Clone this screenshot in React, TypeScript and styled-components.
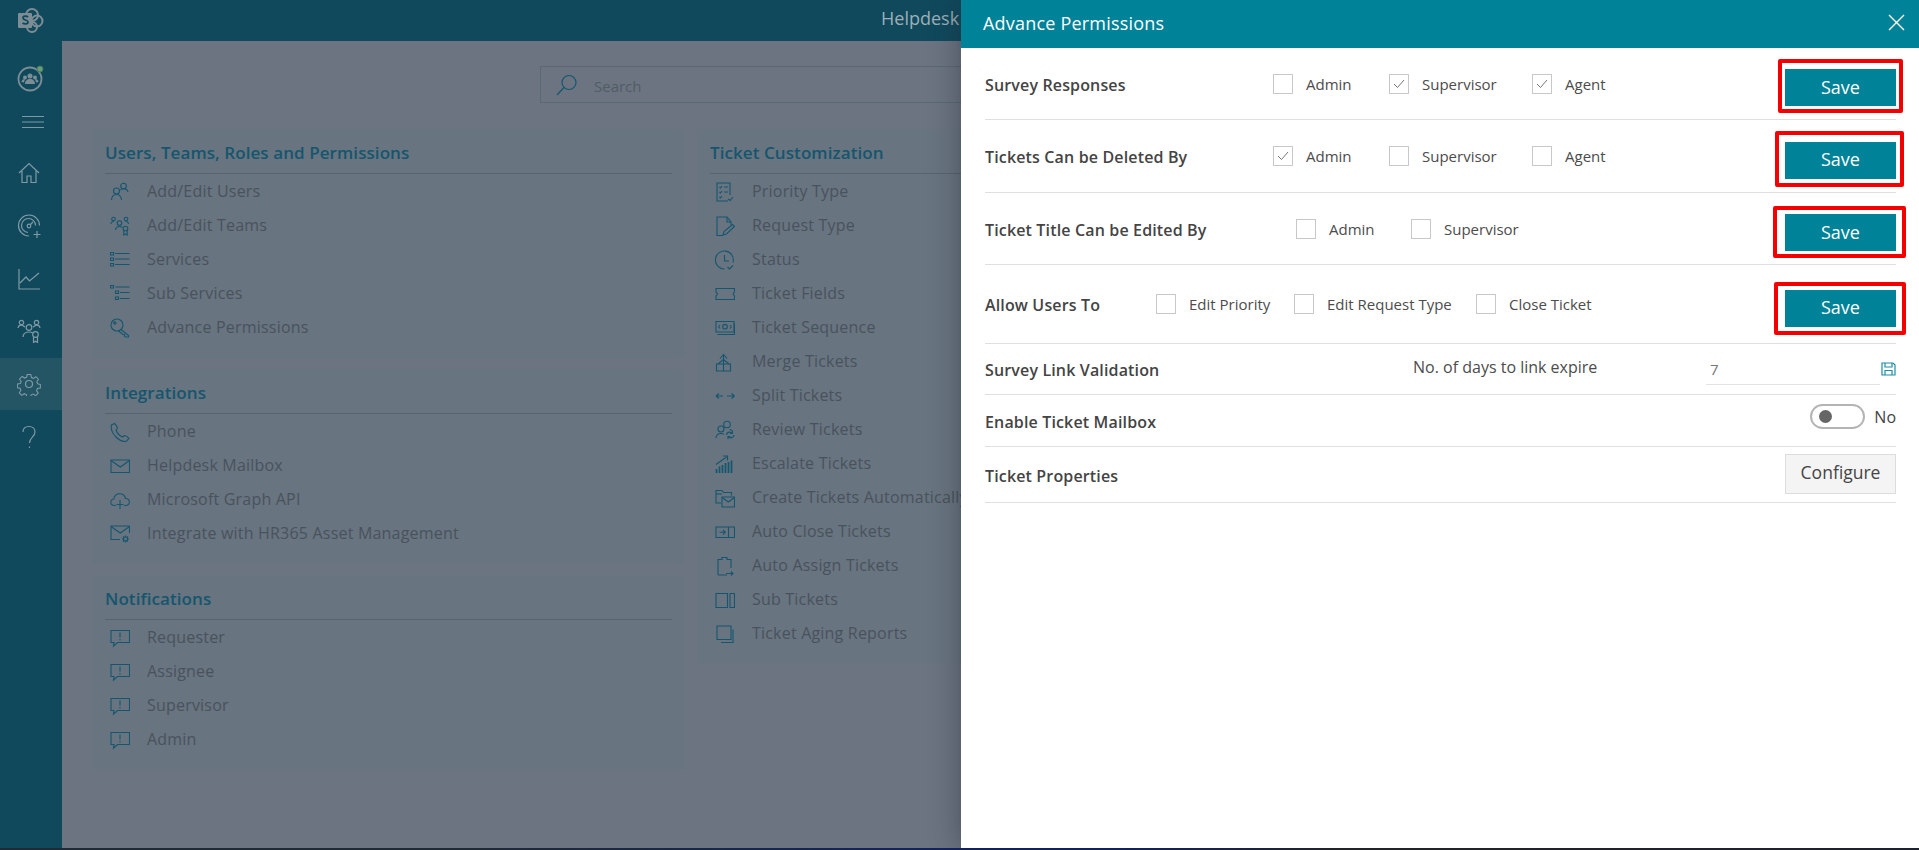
import React from "react"
import styled, { createGlobalStyle } from "styled-components"

const GlobalStyle = createGlobalStyle`
  html, body {
    margin: 0;
    padding: 0;
    overflow: hidden;
  }
  body {
    font-family: "Open Sans", "Noto Sans", sans-serif;
  }
  * {
    box-sizing: border-box;
  }
`

const Page = styled.div`
  position: relative;
  width: 1919px;
  height: 850px;
  overflow: hidden;
  background: #6b7480;
`

const Shell = styled.div`
  display: flex;
  height: 848px;
`

const Sidebar = styled.nav`
  width: 62px;
  flex: none;
  display: flex;
  flex-direction: column;
  background: #10495c;
`

const LogoSlot = styled.div<{ $h: number }>`
  height: ${({ $h }) => $h}px;
  display: flex;
  align-items: center;
  justify-content: center;
`

const NavList = styled.div`
  margin-top: 18px;
`

const NavItem = styled.div<{ $active?: boolean }>`
  height: 52.7px;
  display: flex;
  align-items: center;
  justify-content: center;
  padding-right: 4px;
  background: ${({ $active }) => ($active ? "#235565" : "transparent")};
`

const Main = styled.div`
  flex: 1;
  min-width: 0;
  display: flex;
  flex-direction: column;
`

const TopBar = styled.header`
  height: 41px;
  flex: none;
  padding-left: 819px;
  background: #10495c;
  color: #9db0b9;
  font-size: 18px;
  line-height: 36px;
`

const Content = styled.div`
  padding: 25px 0 0 30px;
`

const SearchRow = styled.div`
  height: 37px;
  width: 900px;
  margin: 0 0 26px 448px;
  display: flex;
  align-items: center;
  gap: 16px;
  padding-left: 15px;
  border: 1px solid #5a6875;
  color: #515c67;
  font-size: 15px;
`

const SearchText = styled.span`
  padding-top: 3px;
`

const Columns = styled.div`
  display: grid;
  grid-template-columns: 593px 593px;
  gap: 12px;
  align-items: start;
`

const Column = styled.div`
  display: flex;
  flex-direction: column;
  gap: 11px;
`

const Card = styled.section`
  padding: 0 13px 13px;
  background: #68747f;
`

const CardTitle = styled.h3`
  margin: 0 0 1px;
  padding: 11px 0 7px;
  font-size: 17px;
  font-weight: 600;
  line-height: 26px;
  letter-spacing: 0.08px;
  color: #15566e;
  border-bottom: 1px solid #586370;
`

const Item = styled.div`
  height: 34px;
  display: flex;
  align-items: center;
  gap: 17px;
  padding-left: 5px;
  color: #48525e;
  font-size: 16px;
  letter-spacing: 0.2px;
  white-space: nowrap;
`

const ItemLabel = styled.span`
  margin-top: -2px;
`

const ItemGlyph = styled.svg`
  width: 20px;
  height: 20px;
  flex: none;
  fill: none;
  stroke: #15566f;
  stroke-width: 1.1;
`

const NavGlyph = styled.svg`
  width: 24px;
  height: 24px;
  fill: none;
  stroke: #7f9aa5;
  stroke-width: 1.2;
`

const BottomStrip = styled.div`
  position: absolute;
  left: 0;
  right: 0;
  bottom: 0;
  height: 2px;
  z-index: 3;
  background: linear-gradient(90deg, #1e2a36 0%, #1e2a36 25%, #13235a 50%, #13235a 58%, #222428 70%, #1d2230 100%);
`

const Panel = styled.aside`
  position: absolute;
  top: 0;
  right: 0;
  bottom: 0;
  width: 958px;
  z-index: 2;
  background: #fff;
  box-shadow: 0 0 28px rgba(30, 38, 48, 0.45);
`

const PanelHeader = styled.div`
  height: 48px;
  display: flex;
  align-items: center;
  justify-content: space-between;
  padding: 0 14px 3px 22px;
  background: #008299;
  color: #fff;
  font-size: 18px;
  letter-spacing: 0.2px;
`

const PanelBody = styled.div`
  padding: 0 23px 0 24px;
`

const Row = styled.div<{ $h: number }>`
  height: ${({ $h }) => $h}px;
  display: flex;
  align-items: center;
  border-bottom: 1px solid #dfdfdf;
`

const RowLabel = styled.div<{ $w?: number }>`
  width: ${({ $w }) => ($w ? `${$w}px` : "auto")};
  flex: none;
  padding-top: 2px;
  color: #444;
  font-size: 16px;
  font-weight: 600;
  letter-spacing: 0.15px;
`

const Option = styled.label<{ $w: number }>`
  width: ${({ $w }) => $w}px;
  flex: none;
  display: flex;
  align-items: center;
  gap: 13px;
  color: #4c4c4c;
  font-size: 15px;
`

const Box = styled.span`
  width: 20px;
  height: 20px;
  flex: none;
  display: grid;
  place-items: center;
  border: 1px solid #c8c8c8;
`

const Spacer = styled.div`
  flex: 1;
`

const SaveWrap = styled.div`
  position: relative;
  flex: none;
  margin-top: 8px;
`

const SaveButton = styled.button`
  display: block;
  width: 111px;
  height: 37px;
  border: 0;
  padding: 0 0 2px;
  background: #008299;
  color: #fff;
  font-family: inherit;
  font-size: 18px;
`

const Highlight = styled.span<{ $x: number; $y: number; $r: number; $b: number }>`
  position: absolute;
  left: -${({ $x }) => $x}px;
  top: -${({ $y }) => $y}px;
  right: -${({ $r }) => $r}px;
  bottom: -${({ $b }) => $b}px;
  border: 4px solid #f40000;
  border-radius: 2px;
`

const Hint = styled.div`
  width: 293px;
  flex: none;
  margin-top: -4px;
  color: #4c4c4c;
  font-size: 16px;
`

const DaysField = styled.div`
  width: 174px;
  height: 28px;
  flex: none;
  margin-top: 3px;
  padding: 2px 0 0 4px;
  border-bottom: 1px solid #e2e2e2;
  color: #777;
  font-size: 15px;
`

const DiskIcon = styled.svg`
  width: 15px;
  height: 14px;
  flex: none;
  margin: 0 0 0 1px;
  fill: none;
  stroke: #1c8ea5;
  stroke-width: 1.2;
`

const ToggleWrap = styled.div`
  display: flex;
  align-items: center;
  gap: 9px;
  margin-top: -8px;
  color: #444;
  font-size: 16px;
`

const Track = styled.span`
  width: 55px;
  height: 25px;
  display: flex;
  align-items: center;
  padding-left: 7px;
  border: 2px solid #b4b4b4;
  border-radius: 13px;
`

const Knob = styled.span`
  width: 13px;
  height: 13px;
  border-radius: 50%;
  background: #666;
`

const ConfigureButton = styled.button`
  width: 111px;
  height: 40px;
  margin-top: -1px;
  padding: 0 0 5px;
  border: 1px solid #dcdcdc;
  background: #f4f4f4;
  color: #444;
  font-family: inherit;
  font-size: 17.5px;
`

type GlyphName =
  | "users" | "teams" | "services" | "subservices" | "key" | "phone" | "mail" | "cloud" | "mailgear" | "note"
  | "priority" | "request" | "status" | "ticket" | "money" | "merge" | "split" | "review" | "escalate"
  | "auto" | "close" | "assign" | "sub" | "aging"

const glyphs: Record<GlyphName, React.ReactNode> = {
  users: (
    <>
      <circle cx="13.5" cy="4" r="2.8" />
      <path d="M11 8.5c-.6-1 1-2 2.5-1.900 2 0 4 1 4.500 3.400" />
      <circle cx="6.5" cy="9" r="3" />
      <path d="M1.500 18c.3-3.500 2.500-5.500 5-5.500s4.500 2 5 5.500" />
    </>
  ),
  teams: (
    <>
      <circle cx="3.500" cy="3" r="1.800" />
      <circle cx="16" cy="3" r="1.800" />
      <circle cx="9.500" cy="7" r="2.300" />
      <path d="M1 8c.3-2 1.500-2.800 3-2.500M18.500 8c-.3-2-1.500-2.800-3-2.500M5.500 14c.3-2.500 2-3.500 4-3.500 1.200 0 2 .3 3 1" />
      <circle cx="15.500" cy="12.500" r="2.300" />
      <path d="M13.800 14.500V19l1.700-1 1.700 1v-4.500" />
    </>
  ),
  services: (
    <>
      <path d="M0.500 2.500h3v2.500h-3zM0.500 8h3v2.500h-3zM0.500 13.500h3V16h-3z" />
      <path d="M5 3.500h14.500M5 9h14.500M5 14.500h14.500" />
    </>
  ),
  subservices: (
    <>
      <path d="M0.500 1.500h3V4h-3zM5.500 7h3v2.500h-3zM5.500 13h3v2.500h-3z" />
      <path d="M5.500 3h14M10 8.500h9.500M10 14.500h9.500" />
    </>
  ),
  key: (
    <>
      <circle cx="7" cy="7" r="6" />
      <circle cx="4.800" cy="5" r="1.100" />
      <path d="M11 11.500l7.500 6v1.500h-3l-1-1v-1.500h-1.500l-4.500-3.500" />
    </>
  ),
  phone: <path d="M4.500 1.500L1.500 3c-1 4 1 8 4 11.500 3.500 3.500 7 5.500 10.500 5l3-3c-1-1.500-2.500-2.500-4.500-3l-2 1.500c-2.500-1-5.500-4-6.500-7L7.500 6c-.5-1.500-1.500-3.500-3-4.500z" />,
  mail: (
    <>
      <path d="M1 4h18.500v12.500H1z" />
      <path d="M1 4.500l9.300 6.500 9.200-6.500" />
    </>
  ),
  cloud: (
    <>
      <path d="M6 15.500H4.500C2 15.500.8 13.800.8 12.300c0-1.800 1.500-3.300 3-3.300C4.200 6 6.500 3.800 9.800 3.800c3 0 5 2 5.700 4.700 2.300 0 3.800 1.700 3.800 3.500s-1.500 3.500-3.800 3.500H14" />
      <path d="M10 10v9M6.500 14.500h7" />
    </>
  ),
  mailgear: (
    <>
      <path d="M19.500 9V2H1v13.500h9" />
      <path d="M1 2.500l9.300 6.500L19.500 2.500" />
      <circle cx="15.500" cy="15" r="2" />
      <path d="M15.500 11.500v1.500M15.500 17v1.500M12 15h1.500M17.500 15H19M13 12.500l1 1M17 16.500l1 1M18 12.500l-1 1M14 16.500l-1 1" />
    </>
  ),
  note: (
    <>
      <path d="M4 14.500H1V2.500h18.500v12H7.500L3.500 18l.5-3.500z" />
      <path d="M10 4.500v5M10 11v1.500" />
    </>
  ),
  priority: (
    <>
      <path d="M15 13V1H2v18h11" />
      <path d="M4.500 5l1 1 1.500-2M4.500 10l1 1 1.500-2M4.500 15l1 1 1.500-2M9 5h4M9 10h4M13 17l2 1.500 3-3.500" />
    </>
  ),
  request: (
    <>
      <path d="M8 19.500H2V1h10l4 5v3" />
      <path d="M12 1v5h4M8 19l1-3.500 8.500-7 2 2-8 7.500z" />
    </>
  ),
  status: (
    <>
      <path d="M18 12.500A9 9 0 1 0 9.500 19" />
      <path d="M9.500 5v6h4.500M12.500 17l2 2 3.500-3.500" />
    </>
  ),
  ticket: <path d="M1 4.500h18.500v3.500l-1.500 2 1.500 2v3.500H1V12l1.500-2L1 8z" />,
  money: (
    <>
      <path d="M1 3.500h18v10.500H1z" />
      <path d="M19.500 5.500v11H2.500" />
      <circle cx="10" cy="8.700" r="2.300" />
      <path d="M3.500 8.700L5 7M3.500 8.700L5 10.500M16.500 8.700L15 7M16.500 8.700L15 10.500" />
    </>
  ),
  merge: (
    <>
      <path d="M1.500 12h7v7h-7zM8.500 12h7v7h-7zM8.500 12V3" />
      <path d="M5 6.500l3.500-4 3.500 4M3 12l5.500-4.500L14 12" />
    </>
  ),
  split: <path d="M1 10h7M1 10l3-2.500M1 10l3 2.500M12 10h7.500M19.500 10l-3-2.500M19.500 10l-3 2.500" />,
  review: (
    <>
      <circle cx="12" cy="4.500" r="3.300" />
      <circle cx="6" cy="9" r="3" />
      <path d="M1 18c.3-3 2.500-4.500 5-4.500 1 0 2 .2 3 .8M14.500 9.500c1 .2 2 .6 3 1.500" />
      <path d="M11.500 15c.3-2 2-3 4-2.800l2 1.300M19 15c-.3 2-2 3-4 2.800l-2-1.300M17.500 11v2.500H15M13 19v-2.500h2.500" />
    </>
  ),
  escalate: (
    <>
      <path d="M1 10.500L11.500 3M8 2h4.500v4.500" />
      <path d="M1.500 19v-4M4.500 19v-6.500M7.500 19V11M10.500 19V9M13.500 19V8M16.500 19V6.500" strokeWidth="1.700" />
    </>
  ),
  auto: (
    <>
      <path d="M6 15H1V2.500h6l1.500 2h8v3" />
      <path d="M1 6h6" />
      <path d="M7 9h12.500v10H7z" />
      <path d="M7 9.500l6.300 4.500 6.200-4.500" />
    </>
  ),
  close: (
    <>
      <path d="M1 5h18.500v10.500H1zM13.500 5v10.500" />
      <path d="M4.500 10.300h5.500M8 8l2.300 2.300L8 12.600" />
    </>
  ),
  assign: (
    <>
      <path d="M3 19V3.500h4V1.500h5v2h4V12" />
      <path d="M3 19h9M11 17.500h7M16 15.500l2 2-2 2" />
    </>
  ),
  sub: <path d="M1 3.500h11.500v14H1zM15 3.500h4.500v14H15z" />,
  aging: (
    <>
      <path d="M2 2h14v13.500H2z" />
      <path d="M18 5.500V18.500H6" />
    </>
  ),
}

const ItemIcon = ({ name }: { name: GlyphName }) => (
  <ItemGlyph viewBox="0 0 20 20">{glyphs[name]}</ItemGlyph>
)

const Check = () => (
  <svg width="12" height="10" viewBox="0 0 12 10" fill="none" stroke="#777" strokeWidth="1">
    <path d="M1 5l3.500 3.500L11 1" />
  </svg>
)

const CheckOption = ({ label, checked, w }: { label: string; checked?: boolean; w: number }) => (
  <Option $w={w}>
    <Box>{checked && <Check />}</Box>
    {label}
  </Option>
)

const ListCard = ({ title, items }: { title: string; items: [GlyphName, string][] }) => (
  <Card>
    <CardTitle>{title}</CardTitle>
    {items.map(([icon, label]) => (
      <Item key={label}>
        <ItemIcon name={icon} />
        <ItemLabel>{label}</ItemLabel>
      </Item>
    ))}
  </Card>
)

const SaveAction = ({ x, y, r, b }: { x: number; y: number; r: number; b: number }) => (
  <SaveWrap>
    <SaveButton>Save</SaveButton>
    <Highlight $x={x} $y={y} $r={r} $b={b} />
  </SaveWrap>
)

const App = () => {
  return (
    <Page>
      <GlobalStyle />
      <Shell>
        <Sidebar>
          <LogoSlot $h={41}>
            <svg width="28" height="27" viewBox="0 0 28 27" fill="none" stroke="#7d8d95" strokeWidth="2">
              <circle cx="15" cy="8" r="6" />
              <circle cx="20" cy="14" r="5.500" />
              <circle cx="15" cy="20" r="5" />
              <rect x="1" y="6" width="14" height="15" rx="1" fill="#7d8d95" stroke="none" />
              <path d="M11 10c-1-1-5-1.500-5 1 0 2.500 5 1.500 5 4 0 2.500-4 2-5.500 1" stroke="#10495c" strokeWidth="1.800" />
            </svg>
          </LogoSlot>
          <LogoSlot $h={74}>
            <svg width="28" height="28" viewBox="0 0 28 28" fill="none">
              <circle cx="13" cy="15" r="11.500" stroke="#7b8d95" strokeWidth="1.800" />
              <circle cx="13" cy="12" r="2.500" fill="#7b8d95" />
              <circle cx="8" cy="13.500" r="2" fill="#7b8d95" />
              <circle cx="18" cy="13.500" r="2" fill="#7b8d95" />
              <path d="M8 20c0-3 2-5 5-5s5 2 5 5zM4.500 18c0-2 1.500-3 3.500-3l-1 3.500zM21.500 18c0-2-1.500-3-3.500-3l1 3.500z" fill="#7b8d95" />
              <circle cx="23" cy="5" r="3" fill="#6c9c74" stroke="#3f7a68" />
            </svg>
          </LogoSlot>
          <LogoSlot $h={14}>
            <svg width="24" height="14" viewBox="0 0 24 14" fill="none" stroke="#7f99a3" strokeWidth="1" style={{ marginLeft: 4 }}>
              <path d="M1 1.500h22M1 7h22M1 12.500h22" />
            </svg>
          </LogoSlot>
          <NavList>
            <NavItem>
              <NavGlyph viewBox="0 0 24 24">
                <path d="M2 12L12 2.500 22 12M5 10v11.500h5V15h4v6.500h5V10" />
              </NavGlyph>
            </NavItem>
            <NavItem>
              <NavGlyph viewBox="0 0 24 24">
                <path d="M12 22A10.500 10.500 0 1 1 22.500 11.500" />
                <path d="M11 18.500A7 7 0 1 1 18.500 11.500" />
                <circle cx="12" cy="12" r="1.800" />
                <path d="M13 11l3-3M20 17v7M16.500 20.500h7" />
              </NavGlyph>
            </NavItem>
            <NavItem>
              <NavGlyph viewBox="0 0 24 24">
                <path d="M2 2v20h21M3 16l6-6 3.500 4L22 6" />
              </NavGlyph>
            </NavItem>
            <NavItem>
              <NavGlyph viewBox="0 0 24 24">
                <circle cx="4.500" cy="3.500" r="2.200" />
                <circle cx="19.500" cy="3.500" r="2.200" />
                <circle cx="12" cy="8.500" r="2.800" />
                <path d="M1 9c.3-2 2-3 4-2.800l3 1.800M23 9c-.3-2-2-3-4-2.800l-3 1.800M6 18c.3-3.500 3-5 6-5 1.500 0 2.800.4 3.800 1" />
                <circle cx="18.500" cy="15.500" r="2.800" />
                <path d="M16.500 18v5.500l2-1.200 2 1.200V18" />
              </NavGlyph>
            </NavItem>
            <NavItem $active>
              <NavGlyph viewBox="0 0 24 24">
                <circle cx="12" cy="12" r="3.500" />
                <path d="M10 1.500h4l.7 3.300 2.200.9 2.800-1.800 2.800 2.800-1.800 2.800.9 2.200 3 .7v4l-3.300.7-.9 2.200 1.800 2.800-2.800 2.800-2.800-1.800-2.200.9-.7 3h-4l-.7-3.300-2.200-.9-2.800 1.800-2.800-2.800 1.800-2.800-.9-2.200-3-.7v-4l3.300-.7.9-2.200-1.800-2.800 2.800-2.800 2.800 1.800 2.200-.9z" transform="translate(1.200 1.200) scale(.9)" />
              </NavGlyph>
            </NavItem>
            <NavItem>
              <NavGlyph viewBox="0 0 24 24">
                <path d="M6 7c0-3.500 2.500-5.500 6-5.500s6 2.200 6 5.500c0 5-5.500 5.500-5.500 11" />
                <path d="M12.500 21.500v1.500" />
              </NavGlyph>
            </NavItem>
          </NavList>
        </Sidebar>
        <Main>
          <TopBar>Helpdesk</TopBar>
          <Content>
            <SearchRow>
              <svg width="22" height="22" viewBox="0 0 22 22" fill="none" stroke="#15566f" strokeWidth="1.200">
                <circle cx="13" cy="8.500" r="7" />
                <path d="M8 13.500L1 21" />
              </svg>
              <SearchText>Search</SearchText>
            </SearchRow>
            <Columns>
              <Column>
                <ListCard
                  title="Users, Teams, Roles and Permissions"
                  items={[
                    ["users", "Add/Edit Users"],
                    ["teams", "Add/Edit Teams"],
                    ["services", "Services"],
                    ["subservices", "Sub Services"],
                    ["key", "Advance Permissions"],
                  ]}
                />
                <ListCard
                  title="Integrations"
                  items={[
                    ["phone", "Phone"],
                    ["mail", "Helpdesk Mailbox"],
                    ["cloud", "Microsoft Graph API"],
                    ["mailgear", "Integrate with HR365 Asset Management"],
                  ]}
                />
                <ListCard
                  title="Notifications"
                  items={[
                    ["note", "Requester"],
                    ["note", "Assignee"],
                    ["note", "Supervisor"],
                    ["note", "Admin"],
                  ]}
                />
              </Column>
              <Column>
                <ListCard
                  title="Ticket Customization"
                  items={[
                    ["priority", "Priority Type"],
                    ["request", "Request Type"],
                    ["status", "Status"],
                    ["ticket", "Ticket Fields"],
                    ["money", "Ticket Sequence"],
                    ["merge", "Merge Tickets"],
                    ["split", "Split Tickets"],
                    ["review", "Review Tickets"],
                    ["escalate", "Escalate Tickets"],
                    ["auto", "Create Tickets Automatically"],
                    ["close", "Auto Close Tickets"],
                    ["assign", "Auto Assign Tickets"],
                    ["sub", "Sub Tickets"],
                    ["aging", "Ticket Aging Reports"],
                  ]}
                />
              </Column>
            </Columns>
          </Content>
        </Main>
      </Shell>
      <Panel>
        <PanelHeader>
          Advance Permissions
          <svg width="17" height="17" viewBox="0 0 17 17" fill="none" stroke="#fff" strokeWidth="1.400">
            <path d="M1 1l15 15M16 1L1 16" />
          </svg>
        </PanelHeader>
        <PanelBody>
          <Row $h={72}>
            <RowLabel $w={288}>Survey Responses</RowLabel>
            <CheckOption label="Admin" w={116} />
            <CheckOption label="Supervisor" checked w={143} />
            <CheckOption label="Agent" checked w={100} />
            <Spacer />
            <SaveAction x={7} y={10} r={7} b={7} />
          </Row>
          <Row $h={73}>
            <RowLabel $w={288}>Tickets Can be Deleted By</RowLabel>
            <CheckOption label="Admin" checked w={116} />
            <CheckOption label="Supervisor" w={143} />
            <CheckOption label="Agent" w={100} />
            <Spacer />
            <SaveAction x={10} y={11} r={8} b={8} />
          </Row>
          <Row $h={72}>
            <RowLabel $w={311}>Ticket Title Can be Edited By</RowLabel>
            <CheckOption label="Admin" w={115} />
            <CheckOption label="Supervisor" w={143} />
            <Spacer />
            <SaveAction x={12} y={8} r={10} b={7} />
          </Row>
          <Row $h={79}>
            <RowLabel $w={171}>Allow Users To</RowLabel>
            <CheckOption label="Edit Priority" w={138} />
            <CheckOption label="Edit Request Type" w={182} />
            <CheckOption label="Close Ticket" w={130} />
            <Spacer />
            <SaveAction x={11} y={8} r={10} b={8} />
          </Row>
          <Row $h={51}>
            <RowLabel $w={428}>Survey Link Validation</RowLabel>
            <Hint>No. of days to link expire</Hint>
            <DaysField>7</DaysField>
            <DiskIcon viewBox="0 0 15 14">
              <path d="M1 1h11l2 2v10H1z" />
              <path d="M4 1v4h7V1M4 13V8.500h7V13" />
            </DiskIcon>
          </Row>
          <Row $h={52}>
            <RowLabel>Enable Ticket Mailbox</RowLabel>
            <Spacer />
            <ToggleWrap>
              <Track>
                <Knob />
              </Track>
              No
            </ToggleWrap>
          </Row>
          <Row $h={56}>
            <RowLabel>Ticket Properties</RowLabel>
            <Spacer />
            <ConfigureButton>Configure</ConfigureButton>
          </Row>
        </PanelBody>
      </Panel>
      <BottomStrip />
    </Page>
  )
}

export default App
